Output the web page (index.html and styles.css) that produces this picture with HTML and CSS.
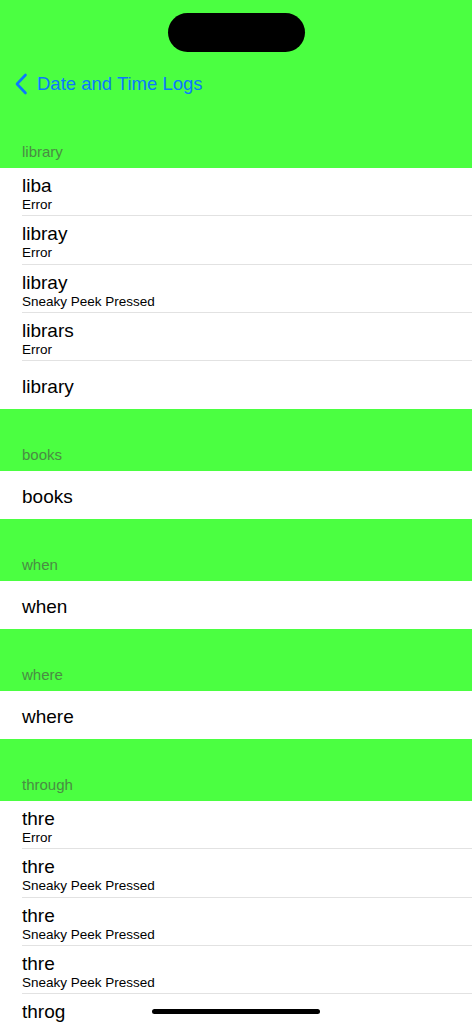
FILE: index.html
```html
<!DOCTYPE html>
<html>
<head>
<meta charset="utf-8">
<link rel="stylesheet" href="styles.css">
</head>
<body>
<div class="top"><div class="island"></div></div>
<div class="nav">
  <svg class="chev" width="14" height="22" viewBox="0 0 14 22"><path d="M11.5 2 L3 11 L11.5 20" fill="none" stroke="#0a78ff" stroke-width="2.6" stroke-linecap="round" stroke-linejoin="round"/></svg>
  <span class="back">Date and Time Logs</span>
</div>

<div class="header">library</div>
<div class="group">
  <div class="row two"><div class="title">liba</div><div class="sub">Error</div></div>
  <div class="row two"><div class="title">libray</div><div class="sub">Error</div></div>
  <div class="row two"><div class="title">libray</div><div class="sub">Sneaky Peek Pressed</div></div>
  <div class="row two"><div class="title">librars</div><div class="sub">Error</div></div>
  <div class="row one"><div class="title">library</div></div>
</div>

<div class="header">books</div>
<div class="group">
  <div class="row one"><div class="title">books</div></div>
</div>

<div class="header">when</div>
<div class="group">
  <div class="row one"><div class="title">when</div></div>
</div>

<div class="header">where</div>
<div class="group">
  <div class="row one"><div class="title">where</div></div>
</div>

<div class="header">through</div>
<div class="group">
  <div class="row two"><div class="title">thre</div><div class="sub">Error</div></div>
  <div class="row two"><div class="title">thre</div><div class="sub">Sneaky Peek Pressed</div></div>
  <div class="row two"><div class="title">thre</div><div class="sub">Sneaky Peek Pressed</div></div>
  <div class="row two"><div class="title">thre</div><div class="sub">Sneaky Peek Pressed</div></div>
  <div class="row two"><div class="title">throg</div></div>
</div>

<div class="home"></div>
</body>
</html>
```
FILE: styles.css
```css
html, body {
  margin: 0;
  padding: 0;
}
body {
  background: #4bff41;
  font-family: "Liberation Sans", Arial, sans-serif;
  color: #000;
  overflow: hidden;
  height: 1024px;
}
.top {
  height: 61px;
  display: flex;
  justify-content: center;
}
.island {
  margin-top: 13px;
  width: 137px;
  height: 39px;
  border-radius: 20px;
  background: #000;
}
.nav {
  height: 45px;
  display: flex;
  align-items: center;
  padding-left: 14px;
}
.chev {
  display: block;
  margin-right: 9px;
}
.back {
  color: #0a78ff;
  font-size: 18.5px;
  line-height: 22px;
}
.header {
  height: 62px;
  box-sizing: border-box;
  display: flex;
  align-items: flex-end;
  padding: 0 0 8px 22px;
  font-size: 15px;
  line-height: 17px;
  color: #4a8c44;
}
.group {
  background: #fff;
}
.row {
  margin-left: 22px;
  height: 48px;
  box-sizing: border-box;
  border-bottom: 1px solid #e2e2e2;
}
.row:last-child {
  border-bottom: none;
}
.row.two {
  height: 48.25px;
  padding-top: 7px;
}
.row.one {
  display: flex;
  align-items: center;
  padding-top: 3px;
}
.title {
  font-size: 19px;
  line-height: 22px;
}
.sub {
  font-size: 13.5px;
  line-height: 16px;
}
.home {
  position: fixed;
  left: 152px;
  bottom: 10px;
  width: 168px;
  height: 5px;
  border-radius: 3px;
  background: #000;
}
```
